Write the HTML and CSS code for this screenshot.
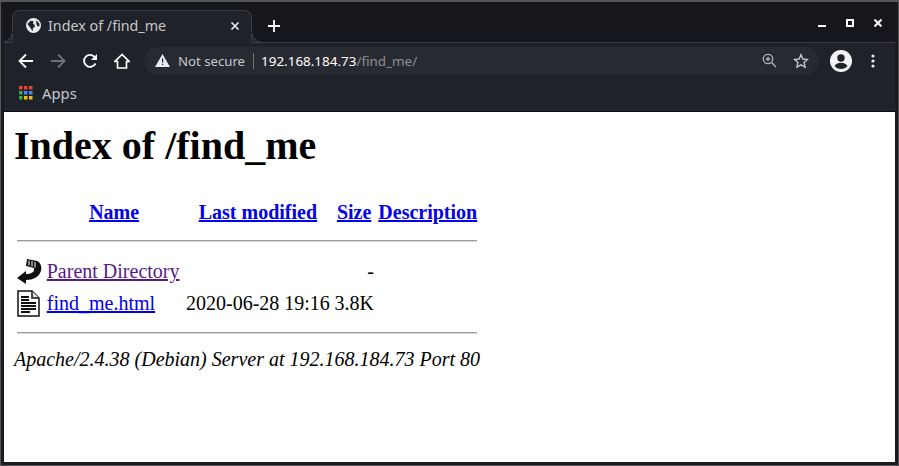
FILE: index.html
```html
<!DOCTYPE html>
<html lang="en">
<head>
  <meta charset="UTF-8">
  <meta name="viewport" content="width=device-width, initial-scale=1.0">
  <title>Index of /find_me</title>
  <link rel="stylesheet" href="styles.css">
</head>
<body>
  <div class="frame">
  <div class="window">
    <div class="titlebar">
      <div class="tab">
        <svg class="globe" width="15" height="15" viewBox="0 0 16 16">
          <circle cx="8" cy="8" r="8" fill="#e8eaed"/>
          <path d="M1.500 6.500L5 3l3 .5-.5 2.500 2 1.500L9 10l-1.500.5-.5 3.500-2.500-4zM11 2.500l3 3 .5 3-2 .5-1.500-2.500z" fill="#202229"/>
        </svg>
        <span class="tab-title">Index of /find_me</span>
        <svg class="tab-close" width="10" height="10" viewBox="0 0 10 10">
          <path d="M1.500 1.500l7 7M8.500 1.500l-7 7" stroke="#e8eaed" stroke-width="1.700"/>
        </svg>
      </div>
      <svg class="newtab" width="14" height="14" viewBox="0 0 14 14">
        <path d="M7 1v12M1 7h12" stroke="#fff" stroke-width="1.800"/>
      </svg>
      <div class="winctl">
        <svg width="8" height="8" viewBox="0 0 8 8"><path d="M0 7h8" stroke="#fff" stroke-width="2"/></svg>
        <svg width="8" height="8" viewBox="0 0 8 8"><rect x="1" y="1" width="6" height="6" fill="none" stroke="#fff" stroke-width="2"/></svg>
        <svg width="8" height="8" viewBox="0 0 8 8"><path d="M.5.500l7 7M7.500.500l-7 7" stroke="#fff" stroke-width="2"/></svg>
      </div>
    </div>

    <div class="toolbar">
      <svg class="nav" width="16" height="16" viewBox="0 0 16 16">
        <path d="M15 8H2M8 1.500L1.500 8 8 14.500" fill="none" stroke="#fff" stroke-width="1.800"/>
      </svg>
      <svg class="nav" width="16" height="16" viewBox="0 0 16 16">
        <path d="M1 8h13M8 1.500L14.500 8 8 14.500" fill="none" stroke="#6f7175" stroke-width="1.800"/>
      </svg>
      <svg class="nav" width="16" height="16" viewBox="0 0 16 16">
        <path d="M13.500 10.500A6 6 0 1 1 13 4.500" fill="none" stroke="#fff" stroke-width="1.800"/>
        <path d="M15 1v6H9z" fill="#fff"/>
      </svg>
      <svg class="nav" width="16" height="16" viewBox="0 0 16 16">
        <path d="M8 1.500L.8 8.500h2.700v6.500h9V8.500h2.700z" fill="none" stroke="#fff" stroke-width="1.700"/>
      </svg>
      <div class="omnibox">
        <svg class="warn" width="15" height="13" viewBox="0 0 15 13">
          <path d="M7.500 0L15 13H0z" fill="#e8eaed"/>
          <path d="M7 4.500h1.200v4H7zM7 9.700h1.200V11H7z" fill="#202229"/>
        </svg>
        <span class="secure">Not secure</span>
        <span class="sep"></span>
        <span class="url">192.168.184.73<span class="url-path">/find_me/</span></span>
        <svg class="zoom" width="15" height="15" viewBox="0 0 15 15">
          <circle cx="6" cy="6" r="4.700" fill="none" stroke="#b4b6b9" stroke-width="1.300"/>
          <path d="M9.500 9.500L14 14M3.800 6h4.400M6 3.800v4.400" stroke="#b4b6b9" stroke-width="1.300" fill="none"/>
        </svg>
        <svg class="star" width="16" height="16" viewBox="0 0 16 16">
          <path d="M8 1.800l1.900 4.200 4.600.5-3.400 3.100 1 4.500L8 11.800l-4.100 2.300 1-4.500-3.400-3.100 4.600-.5z" fill="none" stroke="#c4c6c9" stroke-width="1.400"/>
        </svg>
      </div>
      <svg class="avatar" width="22" height="22" viewBox="0 0 22 22">
        <circle cx="11" cy="11" r="11" fill="#f1f3f4"/>
        <circle cx="11" cy="8" r="3.700" fill="#202229"/>
        <path d="M4.500 16c1.300-2.300 4-3.200 6.500-3.200s5.200.9 6.500 3.200c-1.500 1.900-3.900 3-6.500 3s-5-1.100-6.500-3z" fill="#202229"/>
      </svg>
      <svg class="menu" width="4" height="14" viewBox="0 0 4 14">
        <circle cx="2" cy="2" r="1.600" fill="#e8eaed"/>
        <circle cx="2" cy="7" r="1.600" fill="#e8eaed"/>
        <circle cx="2" cy="12" r="1.600" fill="#e8eaed"/>
      </svg>
    </div>

    <div class="bookmarks">
      <svg class="apps" width="14" height="14" viewBox="0 0 14 14">
        <path d="M0 0h3.500v3.500H0z" fill="#ea4335"/><path d="M5 0h3.500v3.500H5z" fill="#ea4335"/><path d="M10 0h3.500v3.500H10z" fill="#ea4335"/>
        <path d="M0 5h3.500v3.500H0z" fill="#34a853"/><path d="M5 5h3.500v3.500H5z" fill="#4285f4"/><path d="M10 5h3.500v3.500H10z" fill="#4285f4"/>
        <path d="M0 10h3.500v3.500H0z" fill="#34a853"/><path d="M5 10h3.500v3.500H5z" fill="#fbbc05"/><path d="M10 10h3.500v3.500H10z" fill="#fbbc05"/>
      </svg>
      <span>Apps</span>
    </div>

    <div class="page">
      <h1>Index of /find_me</h1>
      <table>
        <tr>
          <th class="icon-col"></th>
          <th><a href="#">Name</a></th>
          <th><a href="#">Last modified</a></th>
          <th><a href="#">Size</a></th>
          <th><a href="#">Description</a></th>
        </tr>
        <tr><th colspan="5"><hr></th></tr>
        <tr>
          <td class="icon-col">
            <svg width="25" height="27" viewBox="0 0 25 27">
              <path d="M0 20l9-7v3c5 0 9-2 8-6L9 8l1-7 10 2c4 2 5 6 4 10-2 6-8 9-15 9v4z" fill="#111"/>
              <path d="M12 2.500v5M15 3v5.500M18 4v5.500" stroke="#fff" stroke-width="1"/>
            </svg>
          </td>
          <td class="name"><a class="visited" href="#">Parent Directory</a></td>
          <td></td>
          <td class="size">-</td>
          <td></td>
        </tr>
        <tr>
          <td class="icon-col">
            <svg width="25" height="27" viewBox="0 0 25 27">
              <path d="M1 1h14l7 7v18H1z" fill="#fff" stroke="#111" stroke-width="1.500"/>
              <path d="M15 1v7h7" fill="#ddd" stroke="#111" stroke-width="1.500"/>
              <path d="M4 7h8M4 10h8M4 13h15M4 16h15M4 19h15M4 22h9" stroke="#111" stroke-width="1.800"/>
            </svg>
          </td>
          <td class="name"><a href="#">find_me.html</a></td>
          <td>2020-06-28 19:16</td>
          <td class="size">3.8K</td>
          <td></td>
        </tr>
        <tr><th colspan="5"><hr class="hr-end"></th></tr>
      </table>
      <address>Apache/2.4.38 (Debian) Server at 192.168.184.73 Port 80</address>
    </div>
  </div>
  </div>
</body>
</html>
```

FILE: styles.css
```css
html, body {
  margin: 0;
  height: 466px;
  overflow: hidden;
}
.frame {
  height: 466px;
  box-sizing: border-box;
  border: 1px solid #55565a;
  border-top-width: 2px;
}
.window {
  height: 100%;
  box-sizing: border-box;
  display: flex;
  flex-direction: column;
  border: 3px solid #1a1b20;
  border-top: none;
  font-family: "Noto Sans", "Open Sans", sans-serif;
  color: #e8eaed;
}
.titlebar {
  height: 40px;
  flex: none;
  display: flex;
  align-items: flex-end;
  background: #15171c;
}
.tab {
  position: relative;
  width: 240px;
  height: 33px;
  margin: 0 0 -1px 8px;
  box-sizing: border-box;
  padding: 0 11px 3px 13px;
  display: flex;
  align-items: center;
  background: #202229;
  border: 1px solid #3a3c42;
  border-bottom: none;
  border-radius: 8px 8px 0 0;
  font-size: 14.300px;
}
/* flared corners at the foot of the tab */
.tab::before,
.tab::after {
  content: "";
  position: absolute;
  bottom: 1px;
  width: 8px;
  height: 8px;
}
.tab::before {
  left: -9px;
  background: radial-gradient(circle at 0 0, #15171c 7px, #3a3c42 7px, #3a3c42 8px, #202229 8px);
}
.tab::after {
  right: -9px;
  background: radial-gradient(circle at 100% 0, #15171c 7px, #3a3c42 7px, #3a3c42 8px, #202229 8px);
}
.tab-title {
  margin-left: 7px;
  flex: 1;
  color: #c6c8cb;
}
.newtab {
  margin: 0 0 9px 15px;
}
.winctl {
  margin-left: auto;
  display: flex;
  gap: 20px;
  padding: 0 13px 15px 0;
}
.winctl svg {
  display: block;
}
.toolbar {
  height: 36px;
  flex: none;
  display: flex;
  align-items: center;
  background: #202229;
  border-top: 1px solid #3a3c42;
  padding-left: 14px;
  box-sizing: border-box;
}
.nav {
  margin-right: 16px;
}
.omnibox {
  width: 675px;
  height: 28px;
  margin-left: -2px;
  box-sizing: border-box;
  padding: 0 10px 0 11px;
  display: flex;
  align-items: center;
  background: #282a32;
  border-radius: 14px;
  font-size: 13.200px;
}
.secure {
  margin-left: 8px;
  color: #c6c8cb;
}
.sep {
  width: 1px;
  height: 16px;
  margin: 0 7px 0 8px;
  background: #6f7175;
}
.url {
  flex: 1;
  color: #fff;
  font-size: 13.450px;
}
.url-path {
  color: #8d8f93;
}
.star {
  margin-left: 16px;
}
.avatar {
  margin-left: 11px;
}
.menu {
  margin-left: 19px;
}
.bookmarks {
  height: 34px;
  flex: none;
  display: flex;
  align-items: center;
  gap: 9px;
  padding: 0 0 4px 15px;
  box-sizing: border-box;
  background: #202229;
  border-bottom: 1px solid #0c0d10;
  font-size: 14.800px;
  color: #c6c8cb;
}
.page {
  flex: 1;
  background: #fff;
  padding: 10px;
  font-family: "Liberation Serif", serif;
  font-size: 20px;
  color: #000;
}
h1 {
  font-size: 40px;
  margin: 1px 0 29px;
  line-height: 46px;
}
table {
  border-spacing: 2.500px;
}
th, td {
  padding: 1.250px;
}
.icon-col {
  width: 25px;
}
.icon-col svg {
  display: block;
}
td.name {
  padding-right: 3.250px;
}
a {
  color: #0000ee;
}
a.visited {
  color: #551a8b;
}
.size {
  text-align: right;
}
hr {
  margin: 11.500px 0;
  border: none;
  border-top: 1px solid #9a9a9a;
  border-bottom: 1px solid #d8d8d8;
}
hr.hr-end {
  margin: 10.500px 0;
}
address {
  line-height: 23px;
}
```
